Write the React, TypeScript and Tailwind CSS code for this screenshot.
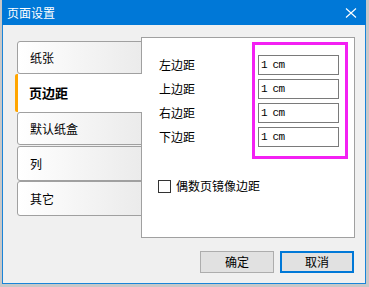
import { useState } from "react";

const tabs = ["纸张", "页边距", "默认纸盒", "列", "其它"];
const margins = ["左边距", "上边距", "右边距", "下边距"];

export default function App() {
  const [active, setActive] = useState(1);
  const [mirror, setMirror] = useState(false);

  return (
    <div className="w-[369px] h-[287px] bg-[#c8c8c8] font-['Noto_Sans_CJK_SC',sans-serif] text-black overflow-hidden">
      <div className="ml-[2px] w-[364px] h-[284px] flex flex-col">
        {/* Title bar */}
        <div className="h-[25px] bg-[#0078d7] flex items-center justify-between pl-[5px] pr-[9px] shrink-0">
          <span className="text-white text-[12px] leading-none">页面设置</span>
          <svg width="12" height="12" viewBox="0 0 12 12" className="text-white">
            <path d="M1 1.5 L11 10.5 M11 1.5 L1 10.5" stroke="currentColor" strokeWidth="1.1" fill="none" />
          </svg>
        </div>

        {/* Body */}
        <div className="flex-1 bg-[#f0f0f0] border-x border-b border-[#1a84d8] flex flex-col">
          <div className="flex pl-[12px] pt-[12px]">
            {/* Tabs */}
            <div className="w-[127px] flex flex-col pt-[4px] shrink-0">
              {tabs.map((t, i) => {
                const heights = ["h-[33px]", "h-[38px]", "h-[33px]", "h-[35px] mt-px", "h-[35px]"];
                if (i === active) {
                  return (
                    <div
                      key={t}
                      onClick={() => setActive(i)}
                      className={`${heights[i]} relative z-10 w-[127px] bg-white border-l-[3px] border-[#ffa500] rounded-l-[2px] pl-[11px] flex items-center text-[13px] font-bold`}
                    >
                      {t}
                    </div>
                  );
                }
                return (
                  <div
                    key={t}
                    onClick={() => setActive(i)}
                    className={`${heights[i]} ml-[2px] w-[125px] border border-[#a0a0a0] rounded-l-[3px] bg-linear-to-r from-white to-[#ebebeb] pl-[12px] flex items-center text-[12px]`}
                  >
                    {t}
                  </div>
                );
              })}
            </div>

            {/* Panel */}
            <div className="-ml-px w-[214px] h-[201px] bg-white border border-[#a0a0a0] flex flex-col">
              <div className="flex">
                <div className="pl-[17px] pt-[17px] flex flex-col gap-[4px]">
                  {margins.map((m) => (
                    <div key={m} className="h-[20px] flex items-center text-[12px]">
                      {m}
                    </div>
                  ))}
                </div>
                <div className="ml-auto mr-[6px] mt-[4px] w-[96px] h-[117px] border-[3px] border-[#f320f3] pl-[3px] pt-[10px] flex flex-col gap-[4px]">
                  {margins.map((m) => (
                    <div
                      key={m}
                      className="w-[81px] h-[20px] border border-[#7a7a7a] bg-white pl-[2px] flex items-center font-['Liberation_Mono',monospace] text-[11px] tracking-[-0.8px]"
                    >
                      1 cm
                    </div>
                  ))}
                </div>
              </div>
              <div
                className="mt-[18px] pl-[16px] flex items-center gap-[5px] text-[12px] cursor-default"
                onClick={() => setMirror(!mirror)}
              >
                <div className="w-[13px] h-[13px] border border-[#333333] bg-white flex items-center justify-center text-[10px] leading-none">
                  {mirror ? "✓" : ""}
                </div>
                <span>偶数页镜像边距</span>
              </div>
            </div>
          </div>

          {/* Buttons */}
          <div className="mt-[13px] flex justify-end gap-[6px] pr-[11px]">
            <button className="w-[74px] h-[22px] bg-[#e1e1e1] border border-[#adadad] text-[12px] leading-none flex items-center justify-center">
              确定
            </button>
            <button className="w-[74px] h-[22px] bg-[#e1e1e1] border-2 border-[#0078d7] text-[12px] leading-none flex items-center justify-center">
              取消
            </button>
          </div>
        </div>
      </div>
    </div>
  );
}
